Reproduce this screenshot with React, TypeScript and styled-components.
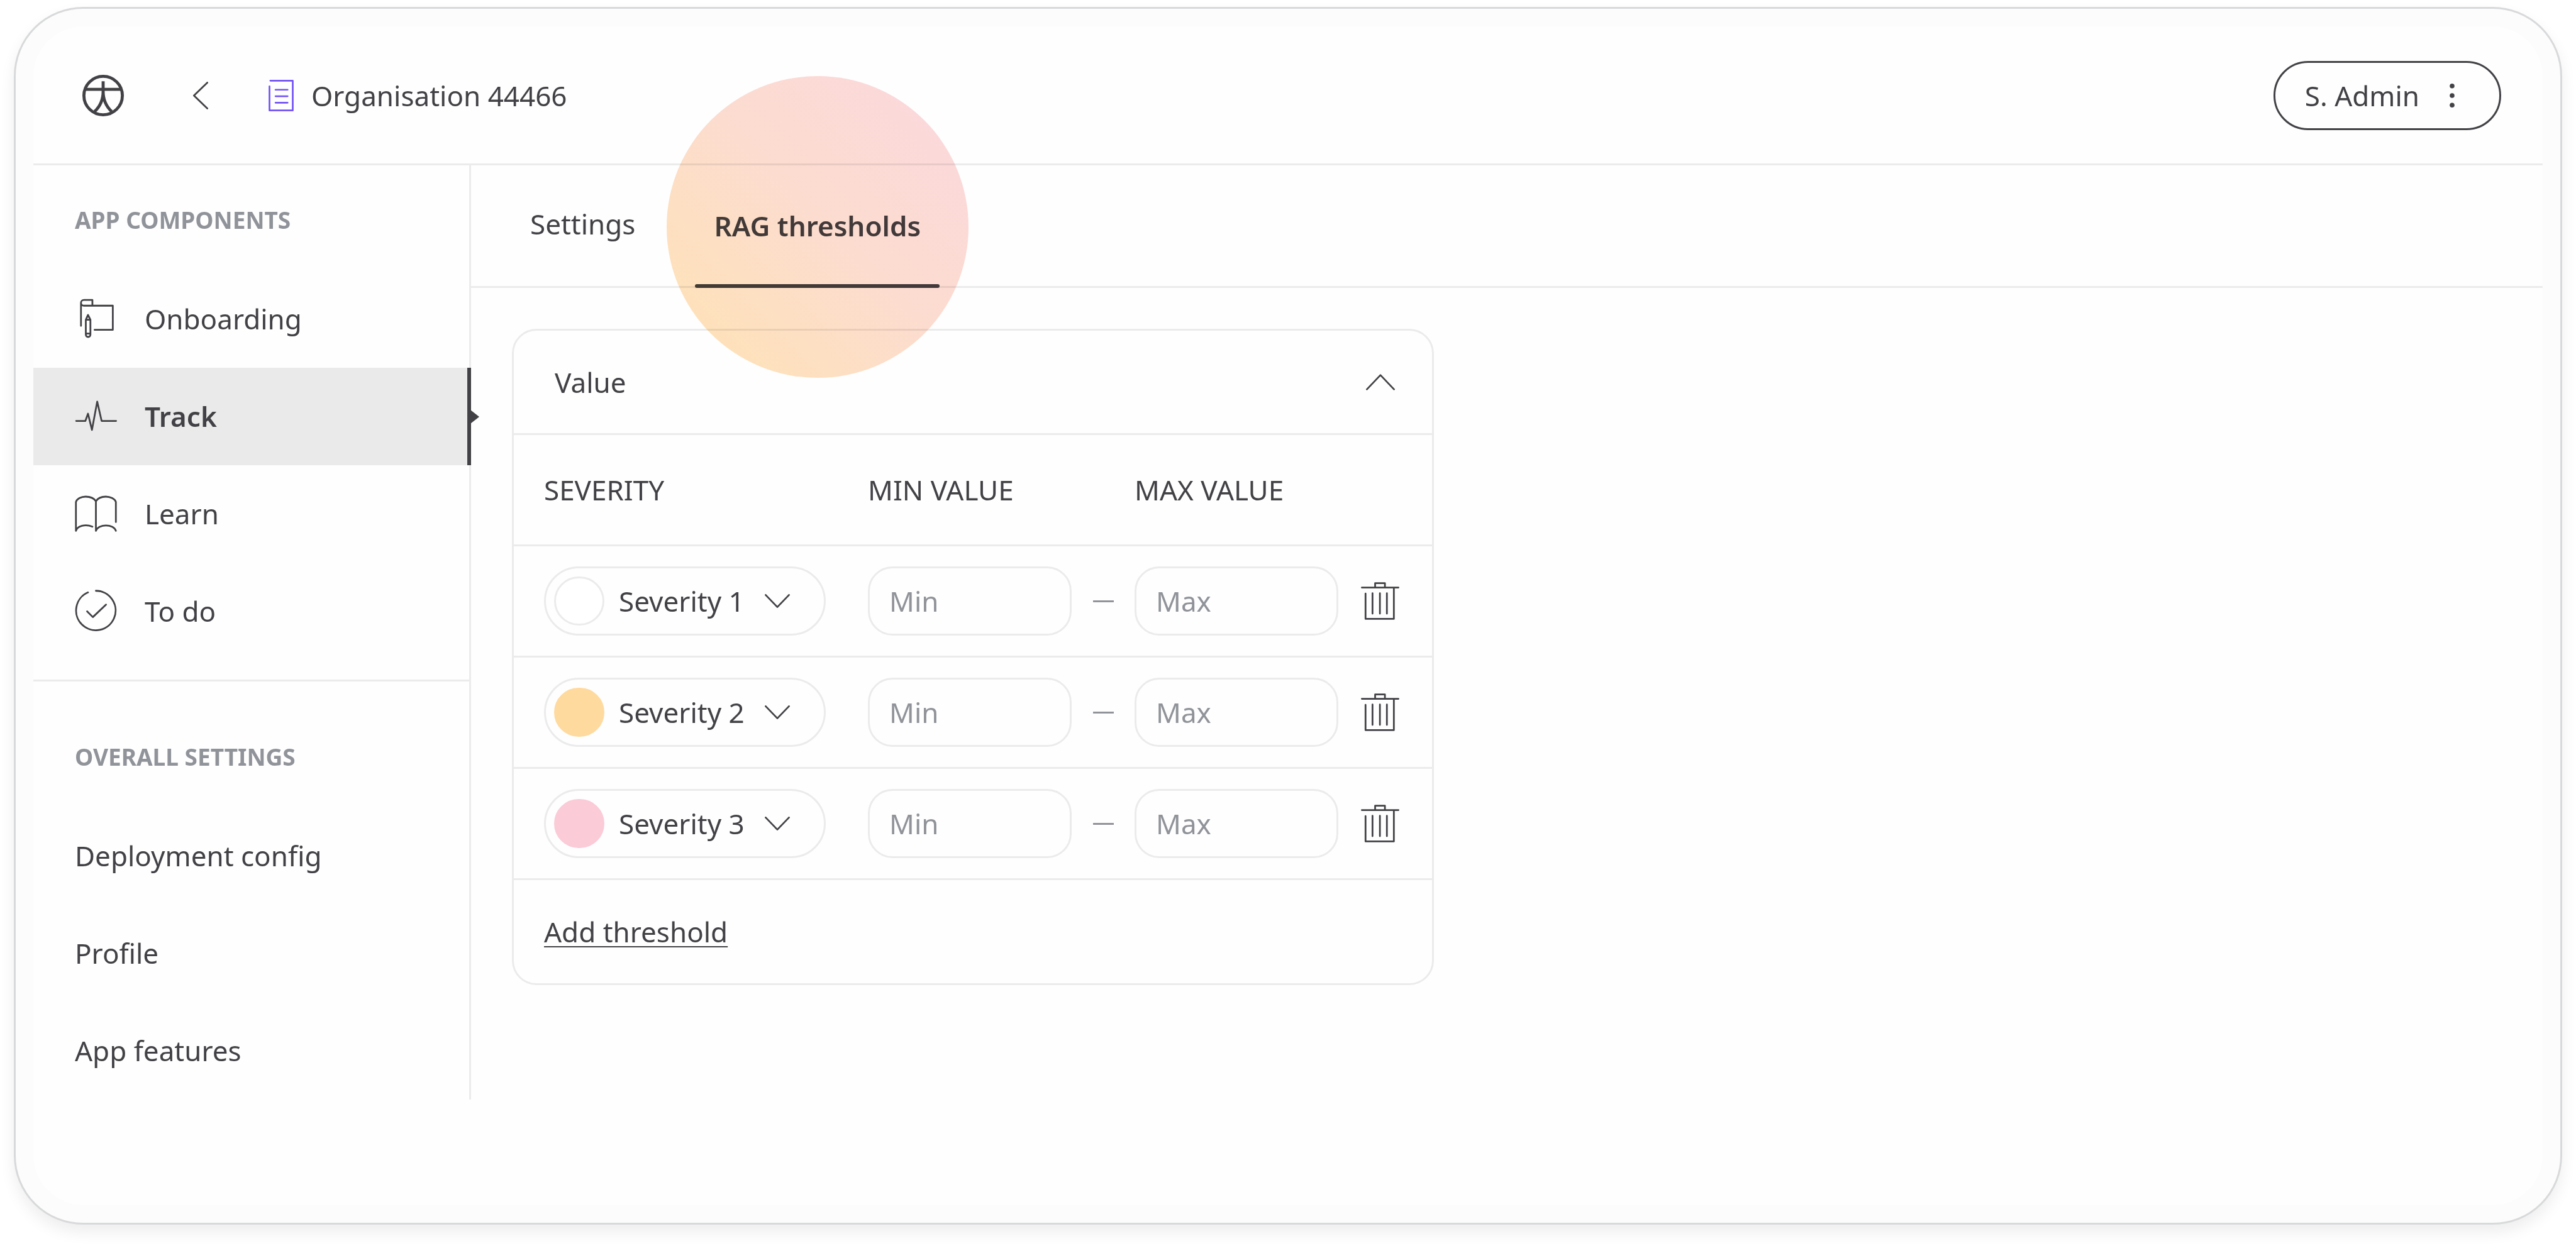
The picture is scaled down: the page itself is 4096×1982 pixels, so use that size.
import React from "react";
import styled, { createGlobalStyle, css } from "styled-components";

const ink = "#424246";
const muted = "#909399";
const line = "#ebebeb";

const GlobalStyle = createGlobalStyle`
  *, *::before, *::after { box-sizing: border-box; }
  html { background: #ffffff; }
  body {
    margin: 0;
    background: #ffffff;
    color: ${ink};
    font-family: "Noto Sans", "Open Sans", sans-serif;
    font-size: 44px;
    line-height: 60px;
  }
  button, input, select { font: inherit; color: inherit; margin: 0; }
  button { display: block; background: none; border: 0; padding: 0; cursor: pointer; }
`;

const Page = styled.div`
  display: flex;
  min-height: 100vh;
  padding: 11px 22px 34px;
`;

const Frame = styled.div`
  flex: 1;
  display: flex;
  min-width: 0;
  padding: 28px;
  border: 3px solid #d8d9db;
  border-radius: 110px;
  background: #fcfcfc;
  box-shadow: 0 12px 24px rgba(0, 0, 0, 0.07);
`;

const Screen = styled.div`
  flex: 1;
  min-width: 0;
  border-radius: 80px;
  background: #fefefe;
`;

const Header = styled.header`
  display: flex;
  align-items: center;
  height: 221px;
  padding: 2px 66px 0 78px;
  border-bottom: 3px solid ${line};
`;

const Icon = styled.svg<{ $w: number; $h: number; $stroke?: number }>`
  display: block;
  flex: none;
  width: ${(p) => p.$w}px;
  height: ${(p) => p.$h}px;
  fill: none;
  stroke: currentColor;
  stroke-width: ${(p) => p.$stroke ?? 4};
  stroke-linecap: round;
  stroke-linejoin: round;
`;

const HomeLink = styled.a`
  color: ${ink};
`;

const BackButton = styled.button`
  margin-left: 110px;
`;

const OrgName = styled.h1`
  display: flex;
  align-items: center;
  gap: 28px;
  margin: 0 auto 0 96px;
  font-size: 44px;
  font-weight: 400;

  svg { color: #7554f6; }
`;

const AccountButton = styled.button`
  display: flex;
  align-items: center;
  gap: 48px;
  height: 110px;
  padding: 0 71px 0 47px;
  border: 3px solid ${ink};
  border-radius: 55px;
`;

const Body = styled.div`
  display: flex;
  align-items: flex-start;
`;

const Sidebar = styled.nav`
  flex: none;
  width: 696px;
  border-right: 3px solid ${line};
`;

const NavGroup = styled.section`
  & + & {
    border-top: 3px solid ${line};
    margin-top: 31px;
    padding-top: 33px;
  }
`;

const NavHeading = styled.h2`
  display: flex;
  align-items: center;
  height: 167px;
  margin: 0;
  padding: 6px 0 0 66px;
  color: ${muted};
  font-size: 37px;
  font-weight: 700;
  line-height: 48px;
`;

const NavItem = styled.a<{ $active?: boolean }>`
  position: relative;
  display: flex;
  align-items: center;
  gap: 44px;
  height: 155px;
  padding: 0 0 2px 66px;
  color: ${ink};
  text-decoration: none;

  ${(p) =>
    p.$active &&
    css`
      margin-right: -3px;
      border-right: 6px solid ${ink};
      background: #eaeaea;
      font-weight: 600;

      &::after {
        content: "";
        position: absolute;
        top: 50%;
        left: 100%;
        margin: -11px 0 0 5px;
        border: 11px solid transparent;
        border-left: 14px solid ${ink};
        border-right: 0;
      }
    `}
`;

const Main = styled.main`
  flex: 1;
  min-width: 0;
`;

const Tabs = styled.div`
  display: flex;
  gap: 65px;
  height: 195px;
  padding: 0 64px;
  border-bottom: 3px solid ${line};
`;

const Tab = styled.button<{ $active?: boolean }>`
  position: relative;
  padding: 0 30px;

  ${(p) =>
    p.$active
      ? css`
          font-weight: 600;

          &::after {
            content: "";
            position: absolute;
            left: 0;
            right: 0;
            bottom: -3px;
            height: 6px;
            border-radius: 3px;
            background: ${ink};
          }
        `
      : css`
          border-bottom: 6px solid transparent;
        `}
`;

const Spotlight = styled.span`
  position: absolute;
  z-index: 1;
  bottom: -146px;
  left: 50%;
  width: 480px;
  height: 480px;
  margin-left: -240px;
  border-radius: 50%;
  background: linear-gradient(45deg, #ffe3b8 8%, #fdddd0 52%, #fcd9dd 92%);
  mix-blend-mode: multiply;
  pointer-events: none;
`;

const Content = styled.div`
  padding: 65px;
`;

const Card = styled.section`
  max-width: 1466px;
  border: 3px solid ${line};
  border-radius: 39px;
`;

const CardHeader = styled.div`
  display: flex;
  align-items: center;
  justify-content: space-between;
  height: 166px;
  padding: 0 59px 0 65px;
  border-bottom: 3px solid ${line};
`;

const CardTitle = styled.h2`
  margin: 0;
  font-size: 44px;
  font-weight: 400;
`;

const Table = styled.table`
  width: 100%;
  border-collapse: separate;
  border-spacing: 0;
  table-layout: fixed;
`;

const cell = css`
  height: 177px;
  padding: 0;
  border-bottom: 3px solid ${line};
  text-align: left;
  vertical-align: middle;
  font-weight: 400;

  &:first-child { padding-left: 48px; }
  &:last-child { padding-left: 36px; }
`;

const Th = styled.th<{ $w?: number }>`
  ${cell}
  width: ${(p) => (p.$w ? `${p.$w}px` : "auto")};
`;

const Td = styled.td`
  ${cell}
`;

const Pill = styled.div`
  display: grid;
  align-items: center;
  width: 448px;
  height: 110px;

  & > * { grid-area: 1 / 1; }
  & > svg { justify-self: end; margin-right: 57px; pointer-events: none; }
`;

const Select = styled.select`
  width: 100%;
  height: 110px;
  padding: 0 100px 0 116px;
  border: 3px solid ${line};
  border-radius: 55px;
  background: transparent;
  appearance: none;
`;

const Swatch = styled.span<{ $fill: string; $edge: string }>`
  width: 80px;
  height: 78px;
  margin-left: 16px;
  border: 3px solid ${(p) => p.$edge};
  border-radius: 39px;
  background: ${(p) => p.$fill};
  pointer-events: none;
`;

const ValueInput = styled.input`
  display: block;
  width: 100%;
  height: 110px;
  padding: 0 31px;
  border: 3px solid ${line};
  border-radius: 39px;
  background: transparent;

  &::placeholder { color: ${muted}; opacity: 1; }
`;

const Dash = styled.span`
  display: block;
  width: 33px;
  height: 3px;
  margin: 0 auto;
  background: ${muted};
`;

const CardFooter = styled.div`
  display: flex;
  align-items: center;
  height: 164px;
  padding: 0 48px;
`;

const AddButton = styled.button`
  text-decoration: underline;
  text-decoration-thickness: 2px;
  text-underline-offset: 6px;
`;

const LogoIcon = () => (
  <Icon $w={66} $h={66} $stroke={7} viewBox="0 0 96 96" aria-hidden="true">
    <circle cx="48" cy="48" r="44.5" />
    <path d="M6 33.5H90M48 15V38C48 60 40 74 28 85M48 38C48 60 56 74 68 85" strokeLinecap="butt" />
  </Icon>
);

const BackIcon = () => (
  <Icon $w={24} $h={44} viewBox="0 0 35 64" aria-hidden="true">
    <path d="M33 2 2 32 33 62" />
  </Icon>
);

const DocumentIcon = () => (
  <Icon $w={40} $h={50} viewBox="0 0 58 73" aria-hidden="true">
    <path d="M4 2H56V71H2V15M16 23H44M16 38H44M16 53H44" />
  </Icon>
);

const MoreIcon = () => (
  <Icon $w={8} $h={38} viewBox="0 0 11 55" aria-hidden="true">
    <g fill="currentColor" stroke="none">
      <circle cx="5.5" cy="5.5" r="5.5" />
      <circle cx="5.5" cy="27.5" r="5.5" />
      <circle cx="5.5" cy="49.5" r="5.5" />
    </g>
  </Icon>
);

const ChevronUp = () => (
  <Icon $w={46} $h={26} viewBox="0 0 67 37" aria-hidden="true">
    <path d="M2 35 33.5 2 65 35" />
  </Icon>
);

const ChevronDown = () => (
  <Icon $w={40} $h={22} viewBox="0 0 58 32" aria-hidden="true">
    <path d="M2 2 29 30 56 2" />
  </Icon>
);

const TrashIcon = () => (
  <Icon $w={61} $h={60} viewBox="0 0 88 86" aria-hidden="true">
    <path d="M2 12H86M32.5 12V2H55V12M10.5 26V84H75.5V12M26.5 25V72M43.5 25V72M59.5 25V72" />
  </Icon>
);

const NavIcon = ({ d }: { d: string }) => (
  <Icon $w={67} $h={67} viewBox="0 0 96 96" aria-hidden="true">
    <path d={d} />
  </Icon>
);

const components = [
  {
    label: "Onboarding",
    d: "M14 65V12.5C14 9 17 6 20.5 6H40V19M14 12.5C14 16 17 19 20.5 19H86.5V74H45M30 40 25 51V85A5.25 5.25 0 0 0 35.5 85V51ZM25 51H35.5M25 82.5H35.5",
  },
  {
    label: "Track",
    active: true,
    d: "M3 59.5H24L30 43 39 80 51 15.5 61 59.5H94",
  },
  {
    label: "Learn",
    d: "M2.5 88V22C5 15 14 10 24.5 10C35 10 44 14 48 20.5C52 14 61 10 70.5 10C81 10 91 15 93.5 22V68M48 20.5V88M2.5 88C5 77 24 71.5 40 78.5M48 88C53 71.5 89 71.5 93.5 88",
  },
  {
    label: "To do",
    d: "M48 2.5A45 45 0 1 1 30 6.2M28 49.5 41 62.5 71 34",
  },
];

const settings = ["Deployment config", "Profile", "App features"];

const thresholds = [
  { id: 1, fill: "#ffffff", edge: line },
  { id: 2, fill: "#ffda9f", edge: "#ffda9f" },
  { id: 3, fill: "#fbcbd7", edge: "#fbcbd7" },
];

export default function App() {
  return (
    <Page>
      <GlobalStyle />
      <Frame>
        <Screen>
          <Header>
            <HomeLink href="#home" aria-label="Home">
              <LogoIcon />
            </HomeLink>
            <BackButton type="button" aria-label="Back">
              <BackIcon />
            </BackButton>
            <OrgName>
              <DocumentIcon />
              Organisation 44466
            </OrgName>
            <AccountButton type="button">
              S. Admin
              <MoreIcon />
            </AccountButton>
          </Header>
          <Body>
            <Sidebar>
              <NavGroup>
                <NavHeading>APP COMPONENTS</NavHeading>
                {components.map((item) => (
                  <NavItem
                    key={item.label}
                    href="#"
                    $active={item.active}
                    aria-current={item.active ? "page" : undefined}
                  >
                    <NavIcon d={item.d} />
                    {item.label}
                  </NavItem>
                ))}
              </NavGroup>
              <NavGroup>
                <NavHeading>OVERALL SETTINGS</NavHeading>
                {settings.map((label) => (
                  <NavItem key={label} href="#">
                    {label}
                  </NavItem>
                ))}
              </NavGroup>
            </Sidebar>
            <Main>
              <Tabs role="tablist">
                <Tab type="button" role="tab" aria-selected={false}>
                  Settings
                </Tab>
                <Tab type="button" role="tab" aria-selected $active>
                  RAG thresholds
                  <Spotlight />
                </Tab>
              </Tabs>
              <Content>
                <Card>
                  <CardHeader>
                    <CardTitle>Value</CardTitle>
                    <button type="button" aria-label="Collapse" aria-expanded>
                      <ChevronUp />
                    </button>
                  </CardHeader>
                  <Table>
                    <thead>
                      <tr>
                        <Th $w={563} scope="col">SEVERITY</Th>
                        <Th $w={324} scope="col">MIN VALUE</Th>
                        <Th $w={100} as="td" />
                        <Th $w={324} scope="col">MAX VALUE</Th>
                        <Th as="td" />
                      </tr>
                    </thead>
                    <tbody>
                      {thresholds.map((t) => (
                        <tr key={t.id}>
                          <Td>
                            <Pill>
                              <Select
                                aria-label={`Severity of threshold ${t.id}`}
                                defaultValue={t.id}
                              >
                                {thresholds.map((o) => (
                                  <option key={o.id} value={o.id}>
                                    Severity {o.id}
                                  </option>
                                ))}
                              </Select>
                              <Swatch $fill={t.fill} $edge={t.edge} />
                              <ChevronDown />
                            </Pill>
                          </Td>
                          <Td>
                            <ValueInput
                              inputMode="decimal"
                              placeholder="Min"
                              aria-label={`Minimum value ${t.id}`}
                            />
                          </Td>
                          <Td>
                            <Dash />
                          </Td>
                          <Td>
                            <ValueInput
                              inputMode="decimal"
                              placeholder="Max"
                              aria-label={`Maximum value ${t.id}`}
                            />
                          </Td>
                          <Td>
                            <button type="button" aria-label={`Delete threshold ${t.id}`}>
                              <TrashIcon />
                            </button>
                          </Td>
                        </tr>
                      ))}
                    </tbody>
                  </Table>
                  <CardFooter>
                    <AddButton type="button">Add threshold</AddButton>
                  </CardFooter>
                </Card>
              </Content>
            </Main>
          </Body>
        </Screen>
      </Frame>
    </Page>
  );
}
